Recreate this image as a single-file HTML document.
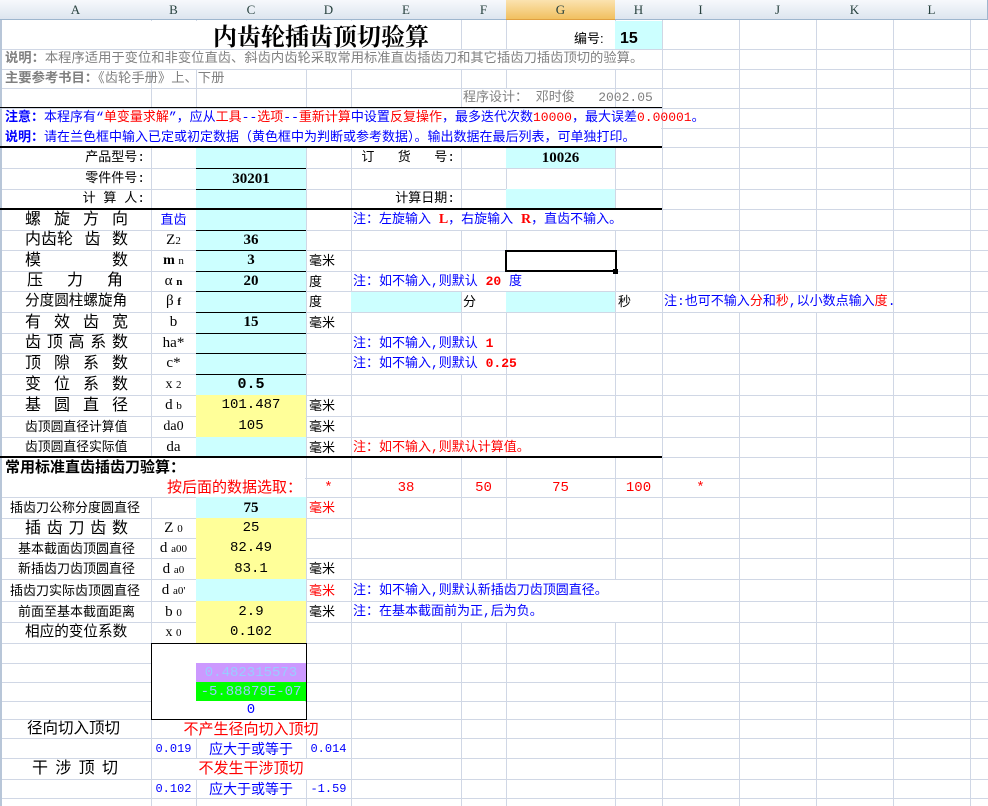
<!DOCTYPE html>
<html><head><meta charset="utf-8"><style>
*{margin:0;padding:0;box-sizing:border-box}
body{width:988px;height:806px;overflow:hidden;background:#fff;position:relative;font-family:"Liberation Sans","Noto Sans CJK SC",sans-serif;font-size:12px;color:#000}
div{position:absolute}
.h{height:1px;left:0;width:988px;background:#d0d7e5}
.v{width:1px;top:20px;height:786px;background:#d0d7e5}
.w{background:#fff}
.cy{background:#ccffff}
.ye{background:#ffff99}
.t{white-space:nowrap}
.m{font-family:"Liberation Mono","Noto Sans CJK SC",monospace}
.c{text-align:center}
.r{text-align:right}
.bl{color:#0000ff}
.rd{color:#ff0000}
.gr{color:#808080}
.sr{font-family:"Liberation Serif","Noto Serif CJK SC",serif}
.j{display:flex;justify-content:space-between;white-space:nowrap}
.k{height:1px;background:#000}
.hd{top:0;height:20px;background:linear-gradient(#f7f9fc,#dde5ef);border-right:1px solid #9eb6ce;border-bottom:1px solid #9eb6ce;text-align:center;line-height:20px;font-family:"Liberation Serif",serif;font-size:13px;color:#27413e}
</style></head><body>

<!-- gridlines -->
<div class="h" style="top:49px"></div><div class="h" style="top:69px"></div><div class="h" style="top:88px"></div><div class="h" style="top:108px"></div><div class="h" style="top:128px"></div><div class="h" style="top:147px"></div><div class="h" style="top:168px"></div><div class="h" style="top:189px"></div><div class="h" style="top:209px"></div><div class="h" style="top:230px"></div><div class="h" style="top:250px"></div><div class="h" style="top:271px"></div><div class="h" style="top:291px"></div><div class="h" style="top:312px"></div><div class="h" style="top:333px"></div><div class="h" style="top:353px"></div><div class="h" style="top:374px"></div><div class="h" style="top:395px"></div><div class="h" style="top:416px"></div><div class="h" style="top:437px"></div><div class="h" style="top:457px"></div><div class="h" style="top:478px"></div><div class="h" style="top:497px"></div><div class="h" style="top:518px"></div><div class="h" style="top:538px"></div><div class="h" style="top:558px"></div><div class="h" style="top:579px"></div><div class="h" style="top:601px"></div><div class="h" style="top:622px"></div><div class="h" style="top:643px"></div><div class="h" style="top:663px"></div><div class="h" style="top:682px"></div><div class="h" style="top:701px"></div><div class="h" style="top:719px"></div><div class="h" style="top:738px"></div><div class="h" style="top:758px"></div><div class="h" style="top:779px"></div><div class="h" style="top:798px"></div>
<div class="v" style="left:151px"></div><div class="v" style="left:196px"></div><div class="v" style="left:306px"></div><div class="v" style="left:351px"></div><div class="v" style="left:461px"></div><div class="v" style="left:506px"></div><div class="v" style="left:615px"></div><div class="v" style="left:662px"></div><div class="v" style="left:739px"></div><div class="v" style="left:816px"></div><div class="v" style="left:893px"></div><div class="v" style="left:970px"></div>
<div style="left:0;top:20px;width:2px;height:786px;background:#b8c6d8"></div>

<!-- white covers -->
<div class="w" style="left:2px;top:21px;width:459px;height:28px"></div>
<div class="w" style="left:2px;top:50px;width:659px;height:19px"></div>
<div class="w" style="left:462px;top:89px;width:152px;height:19px"></div>
<div class="w" style="left:2px;top:109px;width:659px;height:38px"></div>
<div class="w" style="left:352px;top:210px;width:309px;height:20px"></div>
<div class="w" style="left:352px;top:272px;width:262px;height:19px"></div>
<div class="w" style="left:663px;top:292px;width:229px;height:20px"></div>
<div class="w" style="left:352px;top:334px;width:153px;height:19px"></div>
<div class="w" style="left:352px;top:354px;width:153px;height:20px"></div>
<div class="w" style="left:352px;top:438px;width:309px;height:19px"></div>
<div class="w" style="left:2px;top:458px;width:303px;height:39px"></div>
<div class="w" style="left:352px;top:580px;width:309px;height:21px"></div>
<div class="w" style="left:352px;top:602px;width:309px;height:20px"></div>
<div class="w" style="left:152px;top:644px;width:153px;height:75px"></div>
<div class="w" style="left:152px;top:720px;width:198px;height:18px"></div>
<div class="w" style="left:152px;top:759px;width:198px;height:20px"></div>

<!-- fills -->
<div class="cy" style="left:615px;top:21px;width:47px;height:28px"></div>
<div class="cy" style="left:196px;top:148px;width:110px;height:247px"></div>
<div class="ye" style="left:196px;top:395px;width:110px;height:42px"></div>
<div class="cy" style="left:196px;top:437px;width:110px;height:20px"></div>
<div class="cy" style="left:506px;top:148px;width:109px;height:20px"></div>
<div class="cy" style="left:506px;top:189px;width:109px;height:20px"></div>
<div class="cy" style="left:351px;top:292px;width:110px;height:20px"></div>
<div class="cy" style="left:506px;top:292px;width:109px;height:20px"></div>
<div class="cy" style="left:196px;top:497px;width:110px;height:21px"></div>
<div class="ye" style="left:196px;top:518px;width:110px;height:61px"></div>
<div class="cy" style="left:196px;top:579px;width:110px;height:22px"></div>
<div class="ye" style="left:196px;top:601px;width:110px;height:42px"></div>
<div style="left:196px;top:663px;width:110px;height:19px;background:#cc99ff"></div>
<div style="left:196px;top:682px;width:110px;height:19px;background:#00ff00"></div>

<!-- black borders -->
<div class="k" style="left:0;top:107px;width:662px"></div>
<div class="k" style="left:0;top:146px;width:662px;height:2px"></div>
<div class="k" style="left:0;top:208px;width:662px;height:2px"></div>
<div class="k" style="left:0;top:456px;width:662px;height:2px"></div>
<div class="k" style="left:196px;top:168px;width:110px"></div>
<div class="k" style="left:196px;top:189px;width:110px"></div>
<div class="k" style="left:196px;top:230px;width:110px"></div>
<div class="k" style="left:196px;top:250px;width:110px"></div>
<div class="k" style="left:196px;top:271px;width:110px"></div>
<div class="k" style="left:196px;top:291px;width:110px"></div>
<div class="k" style="left:196px;top:312px;width:110px"></div>
<div class="k" style="left:196px;top:333px;width:110px"></div>
<div class="k" style="left:196px;top:353px;width:110px"></div>
<div class="k" style="left:196px;top:374px;width:110px"></div>
<div style="left:151px;top:643px;width:156px;height:77px;border:1px solid #000"></div>
<div style="left:505px;top:250px;width:112px;height:22px;border:2px solid #000"></div>
<div style="left:613px;top:269px;width:5px;height:5px;background:#000"></div>

<!-- column headers -->
<div class="hd" style="left:0;width:152px">A</div>
<div class="hd" style="left:151px;width:46px">B</div>
<div class="hd" style="left:196px;width:111px">C</div>
<div class="hd" style="left:306px;width:46px">D</div>
<div class="hd" style="left:351px;width:111px">E</div>
<div class="hd" style="left:461px;width:46px">F</div>
<div class="hd" style="left:506px;width:110px;background:linear-gradient(#fbe3b0,#f1c060);border-color:#e0a040">G</div>
<div class="hd" style="left:615px;width:48px">H</div>
<div class="hd" style="left:662px;width:78px">I</div>
<div class="hd" style="left:739px;width:78px">J</div>
<div class="hd" style="left:816px;width:78px">K</div>
<div class="hd" style="left:893px;width:78px">L</div>
<div class="hd" style="left:970px;width:18px"></div>

<!-- title rows -->
<div class="t" style="left:213px;top:20px;height:29px;line-height:29px;font-size:24px;font-weight:bold;font-family:'Noto Serif CJK SC',serif">内齿轮插齿顶切验算</div>
<div class="t" style="left:574px;top:20px;line-height:38px;font-size:13px">编号:</div>
<div class="t" style="left:620px;top:20px;line-height:38px;font-size:16px;font-weight:bold">15</div>
<div class="t gr m" style="left:5px;top:49px;line-height:20px;font-size:13.3px"><b>说明：</b>本程序适用于变位和非变位直齿、斜齿内齿轮采取常用标准直齿插齿刀和其它插齿刀插齿顶切的验算。</div>
<div class="t gr m" style="left:5px;top:69px;line-height:19px;font-size:13.3px"><b>主要参考书目：</b>《齿轮手册》上、下册</div>
<div class="t gr m" style="left:463px;top:88px;line-height:20px;font-size:13px">程序设计： 邓时俊 &nbsp; 2002.05</div>
<div class="t bl m" style="left:5px;top:108px;line-height:20px;font-size:13px"><b>注意：</b>本程序有“<span class="rd">单变量求解</span>”，应从<span class="rd">工具</span>--<span class="rd">选项</span>--<span class="rd">重新计算</span>中设置<span class="rd">反复操作</span>，最多迭代次数<span class="rd">10000</span>，最大误差<span class="rd">0.00001</span>。</div>
<div class="t bl m" style="left:5px;top:128px;line-height:19px;font-size:13px"><b>说明：</b>请在兰色框中输入已定或初定数据（黄色框中为判断或参考数据）。输出数据在最后列表，可单独打印。</div>

<!-- header block -->
<div class="t r m" style="left:0;width:145px;top:148px;line-height:20px;font-size:13px">产品型号:</div>
<div class="t r m" style="left:0;width:145px;top:169px;line-height:20px;font-size:13px">零件件号:</div>
<div class="t r m" style="left:0;width:145px;top:189px;line-height:20px;font-size:13px">计 算 人:</div>
<div class="t c" style="left:196px;width:110px;top:169px;line-height:20px;font-size:15px;font-weight:bold;font-family:'Liberation Serif',serif">30201</div>
<div class="t r m" style="left:351px;width:104px;top:148px;line-height:20px;font-size:13px">订 &nbsp; 货 &nbsp; 号:</div>
<div class="t r m" style="left:351px;width:104px;top:189px;line-height:20px;font-size:13px">计算日期:</div>
<div class="t c" style="left:506px;width:109px;top:148px;line-height:20px;font-size:15px;font-weight:bold;font-family:'Liberation Serif',serif">10026</div>

<!-- row labels (A) -->
<div class="j" style="left:25px;width:103px;top:209px;line-height:21px;font-size:16px"><span>螺</span><span>旋</span><span>方</span><span>向</span></div>
<div class="j" style="left:25px;width:103px;top:230px;line-height:20px;font-size:16px"><span>内齿轮</span><span>齿</span><span>数</span></div>
<div class="j" style="left:25px;width:103px;top:250px;line-height:21px;font-size:16px"><span>模</span><span>数</span></div>
<div class="j" style="left:27px;width:96px;top:271px;line-height:20px;font-size:16px"><span>压</span><span>力</span><span>角</span></div>
<div class="t" style="left:25px;top:291px;line-height:21px;font-size:14.6px">分度圆柱螺旋角</div>
<div class="j" style="left:25px;width:103px;top:312px;line-height:21px;font-size:16px"><span>有</span><span>效</span><span>齿</span><span>宽</span></div>
<div class="j" style="left:25px;width:103px;top:333px;line-height:20px;font-size:16px"><span>齿</span><span>顶</span><span>高</span><span>系</span><span>数</span></div>
<div class="j" style="left:25px;width:103px;top:353px;line-height:21px;font-size:16px"><span>顶</span><span>隙</span><span>系</span><span>数</span></div>
<div class="j" style="left:25px;width:103px;top:374px;line-height:21px;font-size:16px"><span>变</span><span>位</span><span>系</span><span>数</span></div>
<div class="j" style="left:25px;width:103px;top:395px;line-height:21px;font-size:16px"><span>基</span><span>圆</span><span>直</span><span>径</span></div>
<div class="t" style="left:25px;top:416px;line-height:21px;font-size:12.8px">齿顶圆直径计算值</div>
<div class="t" style="left:25px;top:437px;line-height:20px;font-size:12.8px">齿顶圆直径实际值</div>

<!-- symbols B -->
<div class="t c bl" style="left:151px;width:45px;top:209px;line-height:21px;font-size:13px">直齿</div>
<div class="t c sr" style="left:151px;width:45px;top:230px;line-height:20px;font-size:15px">Z<span style="font-size:11px">2</span></div>
<div class="t c sr" style="left:151px;width:45px;top:250px;line-height:22px;font-size:14px"><b>m</b> <span style="font-size:11px">n</span></div>
<div class="t c sr" style="left:151px;width:45px;top:271px;line-height:20px;font-size:15px">α <b style="font-size:11px">n</b></div>
<div class="t c sr" style="left:151px;width:45px;top:291px;line-height:21px;font-size:15px">β <b style="font-size:11px">f</b></div>
<div class="t c sr" style="left:151px;width:45px;top:312px;line-height:21px;font-size:15px">b</div>
<div class="t c sr" style="left:151px;width:45px;top:333px;line-height:20px;font-size:15px">ha*</div>
<div class="t c sr" style="left:151px;width:45px;top:353px;line-height:21px;font-size:15px">c*</div>
<div class="t c sr" style="left:151px;width:45px;top:374px;line-height:21px;font-size:14px">x <span style="font-size:11px">2</span></div>
<div class="t c sr" style="left:151px;width:45px;top:395px;line-height:21px;font-size:15px">d <span style="font-size:11px">b</span></div>
<div class="t c sr" style="left:151px;width:45px;top:416px;line-height:21px;font-size:14px">da0</div>
<div class="t c sr" style="left:151px;width:45px;top:437px;line-height:20px;font-size:15px">da</div>

<!-- values C -->
<div class="t c sr" style="left:196px;width:110px;top:230px;line-height:20px;font-size:15px;font-weight:bold">36</div>
<div class="t c sr" style="left:196px;width:110px;top:250px;line-height:21px;font-size:15px;font-weight:bold">3</div>
<div class="t c sr" style="left:196px;width:110px;top:271px;line-height:20px;font-size:15px;font-weight:bold">20</div>
<div class="t c sr" style="left:196px;width:110px;top:312px;line-height:21px;font-size:15px;font-weight:bold">15</div>
<div class="t c m" style="left:196px;width:110px;top:374px;line-height:21px;font-size:15px;font-weight:bold">0.5</div>
<div class="t c m" style="left:196px;width:110px;top:395px;line-height:21px;font-size:14px">101.487</div>
<div class="t c m" style="left:196px;width:110px;top:416px;line-height:21px;font-size:14px">105</div>

<!-- D units -->
<div class="t" style="left:309px;top:250px;line-height:22px;font-size:13px">毫米</div>
<div class="t" style="left:309px;top:271px;line-height:22px;font-size:13px">度</div>
<div class="t" style="left:309px;top:291px;line-height:22px;font-size:13px">度</div>
<div class="t" style="left:309px;top:312px;line-height:22px;font-size:13px">毫米</div>
<div class="t" style="left:309px;top:395px;line-height:22px;font-size:13px">毫米</div>
<div class="t" style="left:309px;top:416px;line-height:22px;font-size:13px">毫米</div>
<div class="t" style="left:309px;top:437px;line-height:22px;font-size:13px">毫米</div>
<div class="t" style="left:463px;top:291px;line-height:22px;font-size:13px">分</div>
<div class="t" style="left:618px;top:291px;line-height:22px;font-size:13px">秒</div>

<!-- notes -->
<div class="t bl m" style="left:353px;top:209px;line-height:22px;font-size:13px">注：左旋输入 <b class="rd sr" style="font-size:14px">L</b>，右旋输入 <b class="rd sr" style="font-size:14px">R</b>，直齿不输入。</div>
<div class="t bl m" style="left:353px;top:271px;line-height:22px;font-size:13px">注：如不输入,则默认 <b class="rd">20</b> 度</div>
<div class="t bl m" style="left:664px;top:291px;line-height:22px;font-size:13px">注:也可不输入<span class="rd">分</span>和<span class="rd">秒</span>,以小数点输入<span class="rd">度</span>.</div>
<div class="t bl m" style="left:353px;top:333px;line-height:22px;font-size:13px">注：如不输入,则默认 <b class="rd">1</b></div>
<div class="t bl m" style="left:353px;top:353px;line-height:22px;font-size:13px">注：如不输入,则默认 <b class="rd">0.25</b></div>
<div class="t rd m" style="left:353px;top:437px;line-height:22px;font-size:13px">注：如不输入,则默认计算值。</div>

<!-- section 2 -->
<div class="t" style="left:5px;top:457px;line-height:22px;font-size:15px;font-weight:bold">常用标准直齿插齿刀验算：</div>
<div class="t rd r" style="left:0;width:302px;top:478px;line-height:20px;font-size:15px">按后面的数据选取：</div>
<div class="t rd c m" style="left:306px;width:45px;top:478px;line-height:21px;font-size:14px">*</div>
<div class="t rd c m" style="left:351px;width:110px;top:478px;line-height:21px;font-size:14px">38</div>
<div class="t rd c m" style="left:461px;width:45px;top:478px;line-height:21px;font-size:14px">50</div>
<div class="t rd c m" style="left:506px;width:109px;top:478px;line-height:21px;font-size:14px">75</div>
<div class="t rd c m" style="left:615px;width:47px;top:478px;line-height:21px;font-size:14px">100</div>
<div class="t rd c m" style="left:662px;width:77px;top:478px;line-height:21px;font-size:14px">*</div>

<div class="t" style="left:10px;top:497px;line-height:22px;font-size:13px">插齿刀公称分度圆直径</div>
<div class="j" style="left:25px;width:103px;top:518px;line-height:21px;font-size:16px"><span>插</span><span>齿</span><span>刀</span><span>齿</span><span>数</span></div>
<div class="t" style="left:18px;top:538px;line-height:21px;font-size:13px">基本截面齿顶圆直径</div>
<div class="t" style="left:18px;top:558px;line-height:22px;font-size:13px">新插齿刀齿顶圆直径</div>
<div class="t" style="left:10px;top:579px;line-height:23px;font-size:13px">插齿刀实际齿顶圆直径</div>
<div class="t" style="left:18px;top:601px;line-height:22px;font-size:13px">前面至基本截面距离</div>
<div class="t" style="left:25px;top:622px;line-height:21px;font-size:14.6px">相应的变位系数</div>

<div class="t c sr" style="left:151px;width:45px;top:518px;line-height:21px;font-size:15px">Z <span style="font-size:11px">0</span></div>
<div class="t c sr" style="left:151px;width:45px;top:538px;line-height:21px;font-size:15px">d <span style="font-size:11px">a00</span></div>
<div class="t c sr" style="left:151px;width:45px;top:558px;line-height:22px;font-size:15px">d <span style="font-size:11px">a0</span></div>
<div class="t c sr" style="left:151px;width:45px;top:579px;line-height:23px;font-size:15px">d <span style="font-size:11px">a0'</span></div>
<div class="t c sr" style="left:151px;width:45px;top:601px;line-height:22px;font-size:15px">b <span style="font-size:11px">0</span></div>
<div class="t c sr" style="left:151px;width:45px;top:622px;line-height:21px;font-size:14px">x <span style="font-size:11px">0</span></div>

<div class="t c sr" style="left:196px;width:110px;top:497px;line-height:22px;font-size:15px;font-weight:bold">75</div>
<div class="t c m" style="left:196px;width:110px;top:518px;line-height:21px;font-size:14px">25</div>
<div class="t c m" style="left:196px;width:110px;top:538px;line-height:21px;font-size:14px">82.49</div>
<div class="t c m" style="left:196px;width:110px;top:558px;line-height:22px;font-size:14px">83.1</div>
<div class="t c m" style="left:196px;width:110px;top:601px;line-height:22px;font-size:14px">2.9</div>
<div class="t c m" style="left:196px;width:110px;top:622px;line-height:21px;font-size:14px">0.102</div>

<div class="t rd" style="left:309px;top:497px;line-height:22px;font-size:13px">毫米</div>
<div class="t" style="left:309px;top:558px;line-height:22px;font-size:13px">毫米</div>
<div class="t rd" style="left:309px;top:579px;line-height:23px;font-size:13px">毫米</div>
<div class="t" style="left:309px;top:601px;line-height:22px;font-size:13px">毫米</div>
<div class="t bl m" style="left:353px;top:579px;line-height:23px;font-size:13px">注：如不输入,则默认新插齿刀齿顶圆直径。</div>
<div class="t bl m" style="left:353px;top:601px;line-height:22px;font-size:13px">注：在基本截面前为正,后为负。</div>

<!-- box -->
<div class="t c m" style="left:196px;width:110px;top:663px;line-height:20px;font-size:14px;color:#99ccff">0.482315573</div>
<div class="t c m" style="left:196px;width:110px;top:682px;line-height:20px;font-size:14px;color:#99ccff">-5.88879E-07</div>
<div class="t c bl m" style="left:196px;width:110px;top:701px;line-height:19px;font-size:14px">0</div>

<!-- results -->
<div class="t" style="left:27px;top:719px;line-height:20px;font-size:15.5px">径向切入顶切</div>
<div class="t rd c" style="left:151px;width:200px;top:719px;line-height:21px;font-size:15px">不产生径向切入顶切</div>
<div class="t bl c m" style="left:151px;width:45px;top:738px;line-height:22px;font-size:12px">0.019</div>
<div class="t bl c" style="left:196px;width:110px;top:738px;line-height:22px;font-size:14px">应大于或等于</div>
<div class="t bl c m" style="left:306px;width:45px;top:738px;line-height:22px;font-size:12px">0.014</div>
<div class="j" style="left:32px;width:86px;top:758px;line-height:21px;font-size:16px"><span>干</span><span>涉</span><span>顶</span><span>切</span></div>
<div class="t rd c" style="left:151px;width:200px;top:758px;line-height:22px;font-size:15px">不发生干涉顶切</div>
<div class="t bl c m" style="left:151px;width:45px;top:779px;line-height:21px;font-size:12px">0.102</div>
<div class="t bl c" style="left:196px;width:110px;top:779px;line-height:21px;font-size:14px">应大于或等于</div>
<div class="t bl c m" style="left:306px;width:45px;top:779px;line-height:21px;font-size:12px">-1.59</div>

</body></html>
